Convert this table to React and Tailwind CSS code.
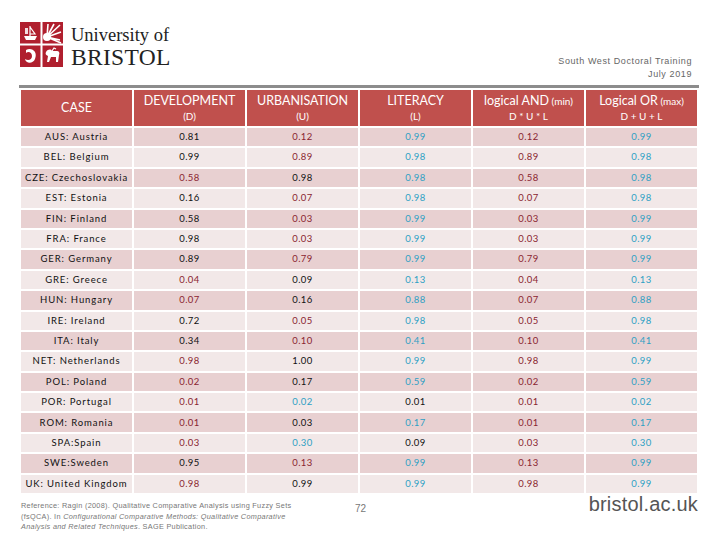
import React from 'react';

const K = 'k';
const R = 'r';
const B = 'b';

// [case, D, U, L, AND, OR] with colour codes for D, U, L
const rows = [
    ['AUS: Austria', ['0.81', K], ['0.12', R], ['0.99', B], '0.12', '0.99'],
    ['BEL: Belgium', ['0.99', K], ['0.89', R], ['0.98', B], '0.89', '0.98'],
    ['CZE: Czechoslovakia', ['0.58', R], ['0.98', K], ['0.98', B], '0.58', '0.98'],
    ['EST: Estonia', ['0.16', K], ['0.07', R], ['0.98', B], '0.07', '0.98'],
    ['FIN: Finland', ['0.58', K], ['0.03', R], ['0.99', B], '0.03', '0.99'],
    ['FRA: France', ['0.98', K], ['0.03', R], ['0.99', B], '0.03', '0.99'],
    ['GER: Germany', ['0.89', K], ['0.79', R], ['0.99', B], '0.79', '0.99'],
    ['GRE: Greece', ['0.04', R], ['0.09', K], ['0.13', B], '0.04', '0.13'],
    ['HUN: Hungary', ['0.07', R], ['0.16', K], ['0.88', B], '0.07', '0.88'],
    ['IRE: Ireland', ['0.72', K], ['0.05', R], ['0.98', B], '0.05', '0.98'],
    ['ITA: Italy', ['0.34', K], ['0.10', R], ['0.41', B], '0.10', '0.41'],
    ['NET: Netherlands', ['0.98', R], ['1.00', K], ['0.99', B], '0.98', '0.99'],
    ['POL: Poland', ['0.02', R], ['0.17', K], ['0.59', B], '0.02', '0.59'],
    ['POR: Portugal', ['0.01', R], ['0.02', B], ['0.01', K], '0.01', '0.02'],
    ['ROM: Romania', ['0.01', R], ['0.03', K], ['0.17', B], '0.01', '0.17'],
    ['SPA:Spain', ['0.03', R], ['0.30', B], ['0.09', K], '0.03', '0.30'],
    ['SWE:Sweden', ['0.95', K], ['0.13', R], ['0.99', B], '0.13', '0.99'],
    ['UK: United Kingdom', ['0.98', R], ['0.99', K], ['0.99', B], '0.98', '0.99'],
];

const colour = {
    k: 'text-[#111]',
    r: 'text-[#8a1f30]',
    b: 'text-[#2f9fc4]',
};

const Crest = () => (
    <svg width="43" height="45" viewBox="0 0 43 45">
        <rect x="0" y="0" width="43" height="45" fill="#b01f2e" />
        <rect x="20.5" y="0" width="2" height="45" fill="#fff" />
        <rect x="0" y="21.5" width="43" height="2" fill="#fff" />
        {/* ship */}
        <path d="M4 14 L17 14 L15 18 L6 18 Z" fill="#fff" />
        <path d="M10 4 L10 14 M10 5 L15 12 L10 12" stroke="#fff" strokeWidth="1.2" fill="none" />
        <path d="M5 6 h3 v6 h-3 z" fill="#fff" opacity="0.85" />
        {/* sun */}
        <circle cx="27" cy="15" r="4" fill="#fff" />
        <path d="M27 15 L40 3 M27 15 L41 10 M27 15 L40 18 M27 15 L34 2 M27 15 L28 2 M27 15 L41 21" stroke="#fff" strokeWidth="1.6" />
        {/* dolphin */}
        <path d="M6 28 C12 25 18 30 15 37 C13 42 6 42 5 37 C8 39 12 38 12 34 C12 30 8 29 6 31 Z" fill="#fff" />
        {/* horse */}
        <path d="M26 30 C28 27 31 27 32 29 L37 29 C39 29 40 31 39 33 L38 40 L36 40 L36 35 L31 35 L29 40 L27 40 L28 34 C26 33 25 32 26 30 Z" fill="#fff" />
        <path d="M32 29 L34 26 L36 27" stroke="#fff" strokeWidth="1.2" fill="none" />
    </svg>
);

const HeadCell = ({ title, sub, small }) => (
    <div className="h-[36px] bg-[#c0504d] text-white flex flex-col items-center justify-center leading-none">
        <div className="text-[12.5px]">
            {title}
            {small && <span className="text-[10px]"> {small}</span>}
        </div>
        {sub && <div className="text-[10px] mt-[4px]">{sub}</div>}
    </div>
);

export default function App() {
    return (
        <div className="w-[720px] h-[540px] bg-white relative overflow-hidden" style={{ fontFamily: 'Lato, "Liberation Sans", sans-serif' }}>
            <div className="flex justify-between items-start pl-[20px] pr-[28px] pt-[21px]">
                <div className="flex items-center gap-[8px]">
                    <Crest />
                    <div className="flex flex-col text-[#222] pt-[4px]" style={{ fontFamily: '"Liberation Serif", serif' }}>
                        <span className="text-[18.5px] leading-[21px]">University of</span>
                        <span className="text-[23.5px] leading-[22px] tracking-[0.3px]">BRISTOL</span>
                    </div>
                </div>
                <div className="flex flex-col items-end text-[9px] text-[#666] leading-[13px] pt-[34px] tracking-[0.6px]" style={{ fontFamily: '"Liberation Sans", sans-serif' }}>
                    <span>South West Doctoral Training</span>
                    <span>July 2019</span>
                </div>
            </div>

            <div className="ml-[19px] w-[680px] h-[3px] bg-[#8c8c8c] mt-[4px]" />

            <div className="ml-[21px] w-[676px] mt-[2px] grid grid-cols-6 gap-[2px] text-[9.5px]">
                <HeadCell title="CASE" />
                <HeadCell title="DEVELOPMENT" sub="(D)" />
                <HeadCell title="URBANISATION" sub="(U)" />
                <HeadCell title="LITERACY" sub="(L)" />
                <HeadCell title="logical AND" small="(min)" sub="D * U * L" />
                <HeadCell title="Logical OR" small="(max)" sub="D + U + L" />
                {rows.map((r, i) => {
                    const bg = i % 2 === 0 ? 'bg-[#e8d0d1]' : 'bg-[#f2e8e8]';
                    return (
                        <React.Fragment key={r[0]}>
                            <div className={`${bg} h-[18.4px] flex items-center justify-center tracking-[0.9px] text-[#111]`}>{r[0]}</div>
                            {[r[1], r[2], r[3]].map(([v, c], j) => (
                                <div key={j} className={`${bg} h-[18.4px] flex items-center justify-center tracking-[0.4px] ${colour[c]}`}>{v}</div>
                            ))}
                            <div className={`${bg} h-[18.4px] flex items-center justify-center tracking-[0.4px] text-[#8a1f30]`}>{r[4]}</div>
                            <div className={`${bg} h-[18.4px] flex items-center justify-center tracking-[0.4px] text-[#2f9fc4]`}>{r[5]}</div>
                        </React.Fragment>
                    );
                })}
            </div>

            <div className="flex items-start pl-[21px] pr-[22px]" style={{ fontFamily: '"Liberation Sans", sans-serif' }}>
                <div className="w-[300px] text-[7.3px] leading-[10.5px] text-[#777] tracking-[0.3px] pt-[8px] whitespace-nowrap">
                    <div>Reference: Ragin (2008). Qualitative Comparative Analysis using Fuzzy Sets</div>
                    <div>(fsQCA). In <i>Configurational Comparative Methods: Qualitative Comparative</i></div>
                    <div><i>Analysis and Related Techniques</i>. SAGE Publication.</div>
                </div>
                <div className="ml-[34px] text-[10px] text-[#777] pt-[8px]">72</div>
                <div className="ml-auto text-[20px] leading-[22px] text-[#555] tracking-[0.2px]">bristol.ac.uk</div>
            </div>
        </div>
    );
}
